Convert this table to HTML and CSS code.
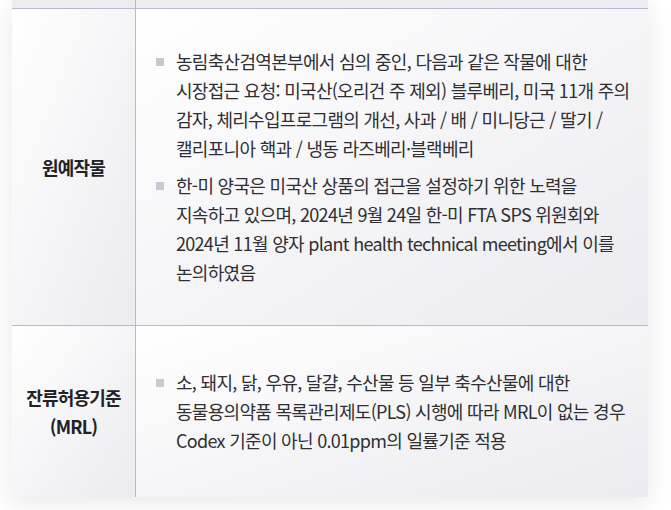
FILE: index.html
```html
<!DOCTYPE html>
<html lang="ko">
<head>
    <meta charset="utf-8"/>
    <title>수출입 검역 현황</title>
    <link rel="stylesheet" href="styles.css">
</head>
<body>

    <main class="sheet">

        <div class="row row-cut">
            <div class="head"></div>
            <div class="body"></div>
        </div>

        <div class="row row-crops">
            <div class="head">원예작물</div>
            <div class="body">
                <ul class="items">
                    <li>농림축산검역본부에서 심의 중인, 다음과 같은 작물에 대한 시장접근 요청: 미국산(오리건 주 제외) 블루베리, 미국 11개 주의 감자, 체리수입프로그램의 개선, 사과 / 배 / 미니당근 / 딸기 / 캘리포니아 핵과 / 냉동 라즈베리·블랙베리</li>
                    <li>한-미 양국은 미국산 상품의 접근을 설정하기 위한 노력을 지속하고 있으며, 2024년 9월 24일 한-미 FTA SPS 위원회와 2024년 11월 양자 plant health technical meeting에서 이를 논의하였음</li>
                </ul>
            </div>
        </div>

        <div class="row row-mrl">
            <div class="head">잔류허용기준<br>(MRL)</div>
            <div class="body">
                <ul class="items">
                    <li>소, 돼지, 닭, 우유, 달걀, 수산물 등 일부 축수산물에 대한 동물용의약품 목록관리제도(PLS) 시행에 따라 MRL이 없는 경우 Codex 기준이 아닌 0.01ppm의 일률기준 적용</li>
                </ul>
            </div>
        </div>

    </main>

</body>
</html>
```

FILE: styles.css
```css
* {
    margin: 0;
    padding: 0;
    box-sizing: border-box;
}

html {
    width: 100%;
}

body {
    width: 100%;
    padding: 0 23px 13px 12px;

    background-color: white;
    font-family: 'Noto Sans CJK KR', 'Noto Sans', sans-serif;
    color: #2f2f33;
    word-break: keep-all;
}

.sheet {
    width: 636px;

    box-shadow: 0 6px 22px rgba(40, 40, 70, 0.10);
}

.row {
    display: grid;
    grid-template-columns: 124px 1fr;

    border-bottom: 1px solid #b9b9cc;
}

.row:last-child {
    border-bottom: none;
}

.row .head,
.row .body {
    background: linear-gradient(to bottom right, #ffffff, #ebebf0);
}

.row .head {
    border-right: 1px solid #b9b9cc;

    display: flex;
    justify-content: center;
    align-items: center;

    font-size: 18px;
    font-weight: 700;
    line-height: 29px;
    letter-spacing: -0.8px;
    text-align: center;
    color: #222226;
}

.row-cut {
    height: 9px;
}

.row-cut .head,
.row-cut .body {
    background: #ececf1;
}

.row-crops .body {
    padding: 38px 12px 38px 20px;
}

.row-mrl .body {
    padding: 42px 12px 42px 20px;
}

.items {
    list-style: none;

    display: flex;
    flex-direction: column;
    gap: 8px;

    font-size: 18px;
    line-height: 29px;
    letter-spacing: -0.7px;
}

.items li {
    position: relative;
    padding-left: 20px;
}

.items li::before {
    content: '';
    position: absolute;
    left: 0;
    top: 11px;

    width: 8px;
    height: 8px;

    background-color: #c6c8d4;
}
```
